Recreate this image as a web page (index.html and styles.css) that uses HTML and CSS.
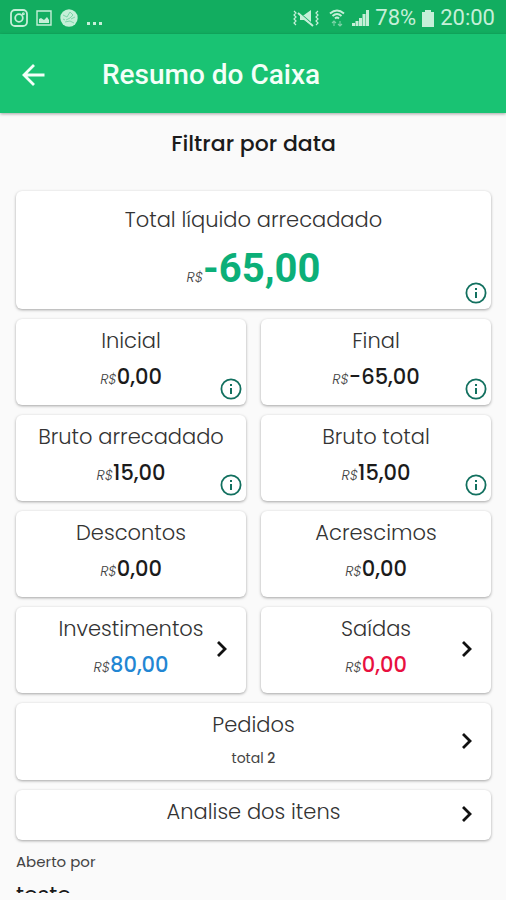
FILE: index.html
```html
<!DOCTYPE html>
<html lang="pt-BR">
<head>
<meta charset="utf-8">
<meta name="viewport" content="width=device-width, initial-scale=1">
<title>Resumo do Caixa</title>
<link rel="stylesheet" href="styles.css">
</head>
<body>
<svg class="sprite" aria-hidden="true">
  <symbol id="info" viewBox="0 0 22 22">
    <circle cx="11" cy="11" r="9.6" fill="none" stroke="currentColor" stroke-width="1.8"/>
    <path d="M10 6h2v2h-2zM10 10h2v6h-2z" fill="currentColor"/>
  </symbol>
  <symbol id="chevron" viewBox="0 0 12 18">
    <path d="M2 2l7 7-7 7" fill="none" stroke="currentColor" stroke-width="2.8"/>
  </symbol>
</svg>
<div class="app">
  <div class="status">
    <div class="status-group">
      <svg width="18" height="18" viewBox="0 0 18 18" fill="none" stroke="currentColor" stroke-width="1.8"><rect x="1" y="1" width="16" height="16" rx="4"/><circle cx="9" cy="9" r="3.8"/><circle cx="13.3" cy="4.7" r=".6"/></svg>
      <svg width="16" height="16" viewBox="0 0 16 16"><path d="M1 1h14v14H1z" fill="none" stroke="currentColor" stroke-width="1.4"/><path d="M3 13V9l2-1 3 2 3-3 2 3v3z" fill="currentColor"/></svg>
      <svg width="18" height="18" viewBox="0 0 18 18"><circle cx="9" cy="9" r="8.7" fill="currentColor"/><path d="M3 6l4 2 3-5 3 3-3 3-4 2M11 10l4-2M5 13l5-1 4 2M3 10l2 1" fill="none" stroke="#7fd6ab" stroke-width="1"/></svg>
      <svg width="16" height="18" viewBox="0 0 16 18" fill="currentColor"><path d="M1 13h3v3H1zM7 13h3v3H7zM13 13h3v3h-3z"/></svg>
    </div>
    <div class="status-group status-right">
      <svg width="26" height="18" viewBox="0 0 26 18"><path d="M7 6h4l7-5v15l-7-5H7z" fill="currentColor"/><path d="M5 3l15 13" stroke="#12ad60" stroke-width="2"/><path d="M5 4l15 13" stroke="currentColor" stroke-width="2"/><path d="M1 2l2 2-2 2 2 2-2 2 2 2-2 2 2 2M25 2l-2 2 2 2-2 2 2 2-2 2 2 2-2 2" fill="none" stroke="currentColor" stroke-width="1.2"/></svg>
      <svg class="wifi" width="16" height="18" viewBox="0 0 16 18" fill="none" stroke="currentColor" stroke-width="1.9"><path d="M1 4.5Q8-1.5 15 4.5M3.500 7Q8 3 12.500 7M6 9.500Q8 7.500 10 9.500"/><path d="M5 17v-5m-2 2l2-2 2 2M11 12v5m-2-2l2 2 2-2" opacity=".6" stroke-width="1.1"/></svg>
      <svg width="18" height="18" viewBox="0 0 18 18"><path d="M1 17v-3h3v3zM4.500 17v-5h3v5zM8 17V9h3v8zM11.500 17V5h3v12zM15 17V1h3v16z" fill="currentColor"/></svg>
      <span>78%</span>
      <svg width="12" height="17" viewBox="0 0 12 17"><path d="M3 0h6v2h3v15H0V2h3z" fill="currentColor"/></svg>
      <span>20:00</span>
    </div>
  </div>
  <header class="topbar">
    <button class="back" aria-label="Voltar"><svg width="24" height="24" viewBox="0 0 24 24" fill="none" stroke="currentColor" stroke-width="2.8"><path d="M13 2L3 12l10 10M3 12h20.500"/></svg></button>
    <h1>Resumo do Caixa</h1>
  </header>
  <main>
    <button class="filter">Filtrar por data</button>
    <div class="cards">
      <section class="card wide hero"><h2>Total líquido arrecadado</h2><p class="value"><i>R$</i><strong>-65,00</strong></p><button class="info" aria-label="Informações"><svg><use href="#info"/></svg></button></section>
      <section class="card"><h2>Inicial</h2><p class="value"><i>R$</i>0,00</p><button class="info" aria-label="Informações"><svg><use href="#info"/></svg></button></section>
      <section class="card"><h2>Final</h2><p class="value"><i>R$</i>-65,00</p><button class="info" aria-label="Informações"><svg><use href="#info"/></svg></button></section>
      <section class="card"><h2>Bruto arrecadado</h2><p class="value"><i>R$</i>15,00</p><button class="info" aria-label="Informações"><svg><use href="#info"/></svg></button></section>
      <section class="card"><h2>Bruto total</h2><p class="value"><i>R$</i>15,00</p><button class="info" aria-label="Informações"><svg><use href="#info"/></svg></button></section>
      <section class="card"><h2>Descontos</h2><p class="value"><i>R$</i>0,00</p></section>
      <section class="card"><h2>Acrescimos</h2><p class="value"><i>R$</i>0,00</p></section>
      <a class="card" href="#"><h2>Investimentos</h2><p class="value blue"><i>R$</i>80,00</p><svg class="chevron"><use href="#chevron"/></svg></a>
      <a class="card" href="#"><h2>Saídas</h2><p class="value red"><i>R$</i>0,00</p><svg class="chevron"><use href="#chevron"/></svg></a>
      <a class="card wide" href="#"><h2>Pedidos</h2><p class="total">total <b>2</b></p><svg class="chevron"><use href="#chevron"/></svg></a>
      <a class="card wide single" href="#"><h2>Analise dos itens</h2><svg class="chevron"><use href="#chevron"/></svg></a>
    </div>
    <p class="opened">Aberto por</p>
    <p class="user">teste</p>
  </main>
</div>
</body>
</html>
```
FILE: styles.css
```css
* { box-sizing: border-box; }
body, h1, h2, p { margin: 0; }
body {
  background: #fafafa;
  color: #1b1b1b;
  font-family: Poppins, Inter, "Liberation Sans", sans-serif;
}
button {
  padding: 0;
  border: 0;
  background: none;
  color: inherit;
  font: inherit;
  cursor: pointer;
}
svg { display: block; flex: none; }
.sprite { position: absolute; width: 0; height: 0; }
.app {
  display: flex;
  flex-direction: column;
  height: 100vh;
  padding-bottom: 7px;
}
.status {
  display: flex;
  flex: none;
  align-items: center;
  justify-content: space-between;
  height: 34px;
  padding: 2px 11px 0 10px;
  background: #12ad60;
  color: #c5efd8;
  font: 22px/32px Roboto, sans-serif;
}
.status-group { display: flex; align-items: center; gap: 8px; }
.status-right { gap: 6px; }
.wifi { margin-left: 4px; }
.topbar {
  position: relative;
  display: flex;
  flex: none;
  align-items: center;
  gap: 57px;
  height: 79px;
  padding: 2px 21px 0;
  background: #19c373;
  color: #f3fff8;
  box-shadow: 0 1px 3px rgba(0, 0, 0, .35);
}
.topbar h1 { font: 500 28px/40px Roboto, sans-serif; }
main {
  flex: 1;
  min-height: 0;
  padding: 13px 15px 0 16px;
  overflow-y: auto;
  scrollbar-width: none;
}
.filter {
  display: block;
  margin: 0 auto 29px;
  font-size: 22px;
  font-weight: 500;
  line-height: 36px;
}
.cards { display: grid; grid-template-columns: 1fr 1fr; gap: 10px 15px; }
.card {
  position: relative;
  display: block;
  padding: 9px 12px 10px;
  border-radius: 6px;
  background: #fff;
  box-shadow: 0 1px 3px rgba(0, 0, 0, .35);
  color: inherit;
  text-align: center;
  text-decoration: none;
}
.wide { grid-column: 1 / -1; }
.card h2 { color: #333; font-size: 21px; font-weight: 300; line-height: 26px; }
.value { margin-top: 5px; font-size: 21px; font-weight: 500; line-height: 36px; }
.value i { color: #444; font-size: 14px; font-weight: 300; line-height: 1; }
.hero { padding-top: 16px; padding-bottom: 5px; }
.hero .value { margin-top: 12px; line-height: 58px; }
.hero strong { color: #0caf78; font: 700 40px/48px Roboto, sans-serif; }
.blue { color: #2286d3; }
.red { color: #e8103f; }
.info { position: absolute; right: 4px; bottom: 5px; color: #12705f; }
.info svg { width: 22px; height: 22px; }
.chevron {
  position: absolute;
  top: 50%;
  right: 18px;
  width: 12px;
  height: 18px;
  margin-top: -10px;
  color: #111;
}
.total { margin-top: 8px; color: #444; font-size: 14px; line-height: 24px; }
.total b { font-weight: 500; }
.single { padding-bottom: 15px; }
.opened { margin-top: 10px; color: #444; font-size: 15px; line-height: 24px; }
.user { margin-top: 5px; font-size: 22px; line-height: 32px; }
```
